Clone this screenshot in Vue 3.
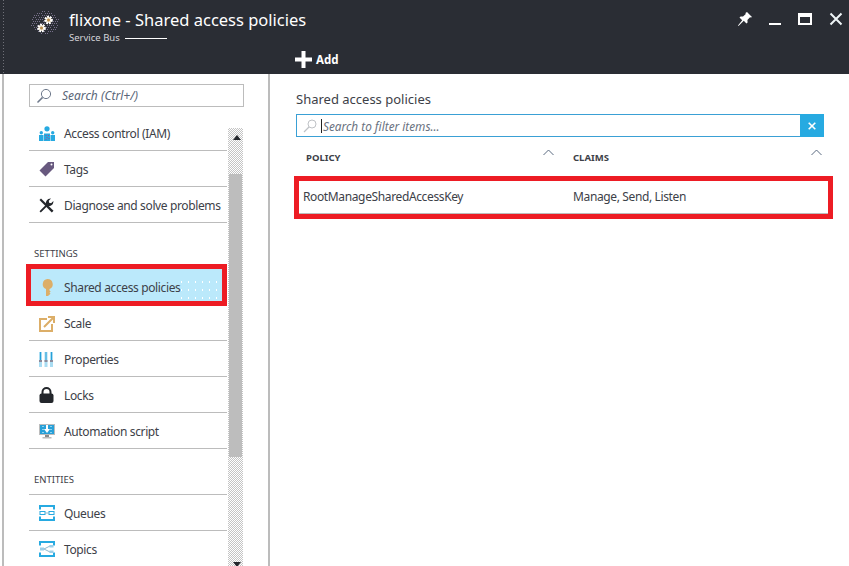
<script setup>
const topRows = [
  { id: 'iam', label: 'Access control (IAM)' },
  { id: 'tag', label: 'Tags' },
  { id: 'tools', label: 'Diagnose and solve problems' },
]
const settingsRows = [
  { id: 'scale', label: 'Scale' },
  { id: 'props', label: 'Properties' },
  { id: 'lock', label: 'Locks' },
  { id: 'auto', label: 'Automation script' },
]
const entityRows = [
  { id: 'queue', label: 'Queues' },
  { id: 'topic', label: 'Topics' },
]
// Speckle halo around the namespace logo
const logoDots = []
for (let y = 1; y < 24; y += 2) {
  for (let x = 1 + (y % 4 === 1 ? 1 : 0); x < 29; x += 2) {
    const d = Math.hypot((x - 14.5) / 14, (y - 12) / 11.5)
    if (d < 1 && (x * 7 + y * 13) % 5 !== 0) logoDots.push({ x, y })
  }
}
</script>

<template>
  <div class="page">
    <header class="head">
      <div class="title-row">
        <svg class="logo" width="30" height="26" viewBox="0 0 30 26">
          <rect v-for="d in logoDots" :key="d.x + '-' + d.y" :x="d.x" :y="d.y" width="1" height="1" fill="#77708a" />
          <circle cx="11.500" cy="18" r="3" fill="#c9a468" stroke="#fff" stroke-width="2.600" stroke-dasharray="1.700 .8"/>
          <circle cx="11.500" cy="18" r="2.800" fill="#fff" opacity=".55"/>
          <circle cx="11.500" cy="18" r="1.500" fill="#b98f4e"/>
          <circle cx="18.500" cy="10" r="3" fill="#c9a468" stroke="#fff" stroke-width="2.600" stroke-dasharray="1.700 .8"/>
          <circle cx="18.500" cy="10" r="2.800" fill="#fff" opacity=".55"/>
          <circle cx="18.500" cy="10" r="1.500" fill="#b98f4e"/>
        </svg>
        <div class="titles">
          <h1 class="title">flixone - Shared access policies</h1>
          <div class="sub"><span>Service Bus</span><i class="sub-line"></i></div>
        </div>
        <div class="win">
          <svg class="pin" width="16" height="16" viewBox="0 0 16 16"><path d="M10 1l5 5-1 .6-1-.4-2.600 2.800.2 2.400-1.200 1.100-2.600-2.700L1.500 15 1 14.500l4.200-5.300-2.700-2.600L3.600 5.400l2.400.2L8.800 3 8.400 2z" fill="#fff"/></svg>
          <i class="min"></i>
          <i class="max"></i>
          <svg width="14" height="14" viewBox="0 0 14 14"><path d="M1.500 1.500l11 11M12.500 1.500l-11 11" stroke="#eef4f6" stroke-width="2" fill="none"/></svg>
        </div>
      </div>
      <div class="cmd">
        <svg width="17" height="17" viewBox="0 0 17 17"><path d="M6.500 0h4v6.500H17v4h-6.500V17h-4v-6.500H0v-4h6.500z" fill="#fff"/></svg>
        <span>Add</span>
      </div>
    </header>

    <main class="body">
      <aside class="left">
        <div class="search">
          <svg width="16" height="16" viewBox="0 0 16 16"><circle cx="10" cy="6" r="4.600" fill="none" stroke="#6f7a8c" stroke-width="1"/><path d="M6.600 9.400L1.500 14.500" stroke="#6f7a8c" stroke-width="1.500"/></svg>
          <span>Search (Ctrl+/)</span>
        </div>
        <div class="menu-wrap">
          <nav class="menu">
            <div v-for="r in topRows" :key="r.id" class="row">
              <span class="ico">
                <svg v-if="r.id==='iam'" width="16" height="15" viewBox="0 0 16 15"><path d="M0 9h4.500v6H0zM5 7.500h6V15H5zM11.500 9H16v6h-4.500z" fill="#27aae1"/><circle cx="2.300" cy="6.800" r="1.700" fill="#27aae1"/><circle cx="13.700" cy="6.800" r="1.700" fill="#27aae1"/><circle cx="8" cy="2.800" r="2.600" fill="#27aae1"/><path d="M6.500 9h1v1h-1zM9 9h1v1H9zM7.500 11h1v1h-1zM9.500 12h1v1h-1zM6.500 13h1v1h-1z" fill="#a74d8c"/></svg>
                <svg v-else-if="r.id==='tag'" width="16" height="16" viewBox="0 0 16 16"><path d="M9 1h6v6l-8.500 8.500L.5 9.500z" fill="#68597f"/><circle cx="12.500" cy="3.500" r="1" fill="#fff"/></svg>
                <svg v-else width="15" height="15" viewBox="0 0 15 15"><path d="M2 .5L14.500 12.800 12.800 14.500.5 2z" fill="#23262b"/><path d="M.5 13.200L7 6.800C6.200 3.500 8.400.2 12 .5L9.800 2.800l.3 2 2 .4L14.400 3c.3 3.500-2.800 6-6 5L1.800 14.500z" fill="#23262b"/></svg>
              </span>
              <span>{{ r.label }}</span>
            </div>
            <div class="sect">SETTINGS</div>
            <div class="row active">
              <span class="ico"><svg width="11" height="17" viewBox="0 0 11 17"><path d="M5.500 0a5.200 5.200 0 0 1 2 10V11.500l1.200 1-1.200 1 1 1.200L6 17H4V10A5.200 5.200 0 0 1 5.500 0z" fill="#dcae68"/></svg></span>
              <span>Shared access policies</span>
              <i class="dots"></i>
            </div>
            <div v-for="r in settingsRows" :key="r.id" class="row" :class="{ 'row-scale': r.id === 'scale' }">
              <span class="ico">
                <svg v-if="r.id==='scale'" width="16" height="16" viewBox="0 0 16 16"><path d="M8 3H1v12h12V8" fill="none" stroke="#dcae68" stroke-width="2"/><path d="M5 11L14 2M9 1h6v6" fill="none" stroke="#dcae68" stroke-width="2"/></svg>
                <svg v-else-if="r.id==='props'" width="14" height="15" viewBox="0 0 14 15"><g fill="#a9dcf2"><rect x="0" y="0" width="3" height="15"/><rect x="5.500" y="0" width="3" height="15"/><rect x="11" y="0" width="3" height="15"/></g><g fill="#27a0d8"><rect x="1" y="0" width="1" height="8"/><rect x="6.500" y="0" width="1" height="8"/><rect x="12" y="0" width="1" height="8"/></g><g fill="#8c8a9a"><rect x="0" y="8" width="3" height="2"/><rect x="5.500" y="8" width="3" height="2"/><rect x="11" y="8" width="3" height="2"/></g></svg>
                <svg v-else-if="r.id==='lock'" width="15" height="16" viewBox="0 0 15 16"><path d="M3.500 7V5a4 4 0 0 1 8 0v2" fill="none" stroke="#23262b" stroke-width="2"/><rect x="0.500" y="6.500" width="14" height="9.500" rx="2" fill="#23262b"/></svg>
                <svg v-else width="16" height="15" viewBox="0 0 16 15"><rect width="16" height="11" fill="#bcbcbc"/><rect x="1" y="1" width="14" height="9" fill="#27a0d8"/><path d="M3 2h2v1H3zM11 2h2v1h-2zM3 5h2v1H3zM11 5h2v1h-2zM3 8h2v1H3zM11 8h2v1h-2z" fill="#8fd2f0"/><path d="M7 1h2v4h2L8 9 5 5h2z" fill="#fff"/><rect x="6" y="11" width="4" height="2" fill="#8a8a8a"/><rect x="3.500" y="13" width="9" height="1.500" fill="#bcbcbc"/></svg>
              </span>
              <span>{{ r.label }}</span>
            </div>
            <div class="sect sect-e">ENTITIES</div>
            <div v-for="r in entityRows" :key="r.id" class="row">
              <span class="ico">
                <svg width="16" height="16" viewBox="0 0 16 16"><path d="M1 4.500V1h14v3.500M1 11.500V15h14v-3.500" fill="none" stroke="#27aae1" stroke-width="2"/>
                  <template v-if="r.id==='queue'"><rect x="1" y="6.500" width="5" height="3" fill="#fff" stroke="#27aae1"/><rect x="10" y="6.500" width="5" height="3" fill="#fff" stroke="#27aae1"/><path d="M6 8h4" stroke="#8fb8cc"/></template>
                  <template v-else><rect x="1" y="6.500" width="4" height="3" fill="#9ccfe8"/><path d="M5 8l6-3M5 8l6 3" stroke="#8fb8cc"/><rect x="10.500" y="4" width="4" height="2.500" fill="#9ccfe8"/><rect x="10.500" y="9.500" width="4" height="2.500" fill="#9ccfe8"/></template>
                </svg>
              </span>
              <span>{{ r.label }}</span>
            </div>
          </nav>
          <div class="scrollbar">
            <svg class="arrow-up" width="8" height="5" viewBox="0 0 8 5"><path d="M4 0l4 5H0z" fill="#23262b"/></svg>
            <i class="thumb"></i>
            <svg class="arrow-down" width="8" height="5" viewBox="0 0 8 5"><path d="M0 0h8L4 5z" fill="#23262b"/></svg>
          </div>
        </div>
      </aside>

      <section class="right">
        <h2 class="rtitle">Shared access policies</h2>
        <div class="filter">
          <div class="finput">
            <svg width="14" height="14" viewBox="0 0 14 14"><circle cx="9" cy="5" r="4" fill="none" stroke="#bfc2c6"/><path d="M6 8l-5 5" stroke="#bfc2c6" stroke-width="1.200"/></svg>
            <i class="caret"></i>
            <span>Search to filter items...</span>
          </div>
          <div class="fclear"><svg width="8" height="8" viewBox="0 0 8 8"><path d="M.7.7l6.600 6.600M7.300.7L.7 7.300" stroke="#fff" stroke-width="1.600"/></svg></div>
        </div>
        <div class="thead">
          <div class="th th1"><span>POLICY</span><svg width="11" height="7" viewBox="0 0 11 7"><path d="M.5 6l5-5 5 5" fill="none" stroke="#5a6a80"/></svg></div>
          <div class="th th2"><span>CLAIMS</span><svg width="11" height="7" viewBox="0 0 11 7"><path d="M.5 6l5-5 5 5" fill="none" stroke="#5a6a80"/></svg></div>
        </div>
        <div class="trow">
          <span class="td1">RootManageSharedAccessKey</span>
          <span class="td2">Manage, Send, Listen</span>
        </div>
      </section>
    </main>
  </div>
</template>

<style>
html, body { margin: 0; padding: 0; background: #fff; overflow: hidden; }
</style>

<style scoped>
.page { width: 849px; height: 566px; overflow: hidden; font-family: "Noto Sans", "Open Sans", sans-serif; color: #3d4148; font-size: 12px; background: #fff; }
.head { height: 74px; background-color: #2a2d34; background-image: repeating-linear-gradient(#6f7078 0 1px, transparent 1px 3px); background-size: 1px 100%; background-position: 3px 0; background-repeat: no-repeat; color: #fff; box-sizing: border-box; padding: 5px 0 0 30px; }
.title-row { display: flex; align-items: flex-start; height: 42px; }
.logo { margin-top: 5px; margin-right: 9px; flex: none; }
.titles { flex: 1; }
.title { margin: 0; font-size: 16.500px; font-weight: 400; line-height: 30px; color: #fff; white-space: nowrap; }
.sub { display: flex; align-items: center; gap: 5px; font-size: 9.500px; color: #d6d6da; line-height: 14px; margin-top: -4px; }
.sub-line { display: block; width: 42px; height: 1px; background: #fff; }
.win { display: flex; align-items: center; gap: 17px; padding: 6px 6px 0 0; }
.pin { margin-right: -1px; }
.min { display: block; width: 12px; height: 2px; background: #fff; margin-top: 9px; }
.max { display: block; width: 10px; height: 6px; border: 2px solid #fff; border-top-width: 4px; }
.cmd { display: flex; align-items: center; gap: 4px; margin: 4px 0 0 265px; font-size: 11.500px; font-weight: 700; }
.body { display: flex; height: 492px; }
.left { margin-left: 2px; border-left: 2px solid #bcbcbc; border-right: 2px solid #bcbcbc; box-sizing: border-box; padding: 10px 24px 0 25px; flex: none; width: 268px; }
.search { height: 23px; width: 215px; box-sizing: border-box; border: 1px solid #bcbcbc; display: flex; align-items: center; gap: 10px; padding-left: 6px; font-style: italic; color: #5a6678; font-size: 12px; }
.menu-wrap { display: flex; margin-top: 8px; }
.menu { width: 198px; flex: none; }
.row { height: 36px; box-sizing: border-box; padding-top: 1px; border-bottom: 1px solid #bcbcbc; display: flex; align-items: center; position: relative; white-space: nowrap; font-size: 12px; letter-spacing: -0.37px; }
.row-scale { height: 35px; }
.ico { width: 35px; flex: none; padding-left: 10px; box-sizing: border-box; display: flex; align-items: center; }
.sect { height: 41px; box-sizing: border-box; padding: 25px 0 0 5px; font-size: 9.500px; line-height: 12px; color: #3d4148; }
.sect-e { height: 46px; padding-top: 25px; border-bottom: 1px solid #bcbcbc; }
.active { height: 42px; margin-left: -3px; width: 201px; border: 5px solid #ed1c24; background: #bbe9fb; padding-top: 4px; }
.active .ico { width: 33px; padding-left: 11px; }
.dots { position: absolute; right: 4px; top: 9px; width: 40px; height: 22px; background-image: radial-gradient(#fff 0.6px, transparent 0.8px); background-size: 7px 8px; }
.scrollbar { width: 15px; height: 438px; margin: 13px 0 0 1px; flex: none; position: relative; background: repeating-conic-gradient(#c4c4c4 0 25%, #fff 0 50%) 0 0 / 2px 2px; }
.arrow-up { position: absolute; top: 7px; left: 5px; }
.arrow-down { position: absolute; bottom: -1px; left: 5px; }
.thumb { position: absolute; top: 46px; left: 1px; width: 13px; height: 283px; background: #bdbdbd; }
.right { flex: 1; padding: 0 16px 0 26px; box-sizing: border-box; min-width: 0; }
.rtitle { margin: 15px 0 0; font-size: 13px; font-weight: 400; line-height: 20px; color: #3d4148; }
.filter { display: flex; height: 23px; width: 528px; margin-top: 5px; }
.finput { flex: 1; border: 1px solid #3aa0d5; border-right: 0; display: flex; align-items: center; padding-left: 6px; font-style: italic; font-size: 11.800px; color: #6a7280; }
.caret { display: block; width: 1px; height: 14px; background: #222; margin: 0 1px 0 4px; }
.fclear { width: 24px; background: #27aae1; display: flex; align-items: center; justify-content: center; }
.thead { display: flex; height: 39px; align-items: flex-start; }
.th { display: flex; justify-content: space-between; font-size: 9.500px; font-weight: 700; color: #3d4148; padding-top: 15px; line-height: 12px; }
.th svg { margin-top: -3px; }
.th1 { width: 258px; padding-left: 10px; box-sizing: border-box; }
.th2 { flex: none; width: 249px; margin-left: 19px; }
.trow { width: 539px; height: 43px; margin-left: -2px; box-sizing: border-box; border: 5px solid #ed1c24; padding-bottom: 2px; display: flex; align-items: center; font-size: 12px; letter-spacing: -0.37px; box-shadow: inset 0 -1px 0 #bcbcbc; white-space: nowrap; }
.td1 { width: 274px; padding-left: 4px; box-sizing: border-box; }
</style>
